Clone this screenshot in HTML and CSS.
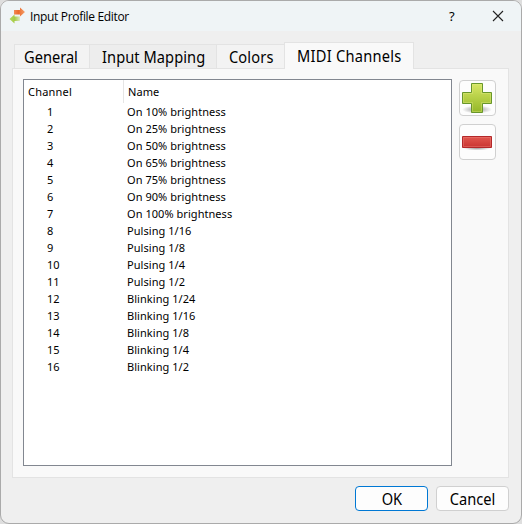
FILE: index.html
```html
<!DOCTYPE html>
<html lang="en">
<head>
<meta charset="utf-8">
<title>Input Profile Editor</title>
<link rel="stylesheet" href="styles.css">
</head>
<body>
<div class="window">
  <header class="titlebar">
    <svg class="app-icon" width="18" height="18" viewBox="0 0 18 18">
      <defs>
        <linearGradient id="orange"><stop offset="0" stop-color="#f28a55"/><stop offset=".4" stop-color="#ec6a2c"/><stop offset="1" stop-color="#f2a06c"/></linearGradient>
        <linearGradient id="lime"><stop offset="0" stop-color="#b4d65c"/><stop offset=".5" stop-color="#a6cc48"/><stop offset="1" stop-color="#dfe9c4"/></linearGradient>
      </defs>
      <path d="M5 3h6V.5l5 4.500-5 4.500V7.500H5z" fill="url(#orange)"/>
      <path d="M11 9.500H5.500V7.500L.5 12l5 4.500V14H11z" fill="url(#lime)"/>
    </svg>
    <span class="title">Input Profile Editor</span>
    <span class="help">?</span>
    <svg class="close" width="12" height="12" viewBox="0 0 12 12"><path d="M1 1l10 10M11 1L1 11" fill="none" stroke="#222" stroke-width="1.100"/></svg>
  </header>
  <nav class="tabs">
    <div class="tab general"><span>General</span></div>
    <div class="tab mapping"><span>Input Mapping</span></div>
    <div class="tab colors"><span>Colors</span></div>
    <div class="tab midi active"><span>MIDI Channels</span></div>
  </nav>
  <main class="page">
    <div class="list">
      <div class="head"><span class="channel-head">Channel</span><span class="name-head">Name</span></div>
      <div class="row"><span>1</span><span>On 10% brightness</span></div>
      <div class="row"><span>2</span><span>On 25% brightness</span></div>
      <div class="row"><span>3</span><span>On 50% brightness</span></div>
      <div class="row"><span>4</span><span>On 65% brightness</span></div>
      <div class="row"><span>5</span><span>On 75% brightness</span></div>
      <div class="row"><span>6</span><span>On 90% brightness</span></div>
      <div class="row"><span>7</span><span>On 100% brightness</span></div>
      <div class="row"><span>8</span><span>Pulsing 1/16</span></div>
      <div class="row"><span>9</span><span>Pulsing 1/8</span></div>
      <div class="row"><span>10</span><span>Pulsing 1/4</span></div>
      <div class="row"><span>11</span><span>Pulsing 1/2</span></div>
      <div class="row"><span>12</span><span>Blinking 1/24</span></div>
      <div class="row"><span>13</span><span>Blinking 1/16</span></div>
      <div class="row"><span>14</span><span>Blinking 1/8</span></div>
      <div class="row"><span>15</span><span>Blinking 1/4</span></div>
      <div class="row"><span>16</span><span>Blinking 1/2</span></div>
    </div>
    <div class="tools">
      <button class="tool" aria-label="Add">
        <svg width="32" height="32" viewBox="0 0 32 32">
          <defs>
            <linearGradient id="plus" x2="0" y2="1"><stop offset="0" stop-color="#d8e765"/><stop offset="1" stop-color="#93b727"/></linearGradient>
            <radialGradient id="shade"><stop offset="0" stop-color="#000" stop-opacity=".4"/><stop offset="1" stop-color="#000" stop-opacity="0"/></radialGradient>
          </defs>
          <ellipse cx="16" cy="27.500" rx="15" ry="4" fill="url(#shade)"/>
          <path d="M10.500 1.500h11v9h9v11h-9v9h-11v-9h-9v-11h9z" fill="url(#plus)" stroke="#68962b"/>
          <path d="M11.500 2.500h9v9h9v9h-9v9h-9v-9h-9v-9h9z" fill="none" stroke="#e4ee8c" stroke-opacity=".35"/>
        </svg>
      </button>
      <button class="tool" aria-label="Remove">
        <svg width="32" height="32" viewBox="0 0 32 32">
          <defs><linearGradient id="minus" x2="0" y2="1"><stop offset="0" stop-color="#e2574f"/><stop offset="1" stop-color="#c93531"/></linearGradient></defs>
          <ellipse cx="16" cy="22" rx="14" ry="2.500" fill="url(#shade)"/>
          <path d="M1.500 10.500h29v11h-29z" fill="url(#minus)" stroke="#b3282a"/>
          <path d="M2.500 11.500h27v9h-27z" fill="none" stroke="#f08880" stroke-opacity=".4"/>
        </svg>
      </button>
    </div>
  </main>
  <footer class="actions">
    <button class="btn primary"><span>OK</span></button>
    <button class="btn cancel"><span>Cancel</span></button>
  </footer>
</div>
</body>
</html>
```
FILE: styles.css
```css
* { box-sizing: border-box; }
body { margin: 0; background: #dedede; font-family: "Noto Sans", "Open Sans", sans-serif; color: #000; overflow: hidden; }
.window { width: 522px; height: 524px; border: 1px solid #aaa; border-radius: 9px; background: #efefef; overflow: hidden; display: flex; flex-direction: column; }
.titlebar { height: 30px; flex: none; background: #eff4f6; display: flex; align-items: center; padding: 0 17px 0 8px; font-size: 12px; }
.app-icon { margin-right: 3px; flex: none; }
.title { flex: 1; letter-spacing: -0.330px; font-family: "Open Sans", sans-serif; }
.help { width: 8px; margin-right: 35px; font-size: 13px; padding-bottom: 1px; }
.close { margin: -1px 0 0 0; }
.tabs { height: 37px; flex: none; padding-left: 13px; display: flex; align-items: flex-end; font-size: 17px; line-height: 20px; }
.tab { height: 24px; border: 1px solid #e3e3e3; border-width: 1px 1px 0 0; background: #f3f3f3; padding: 2px 0 0 9px; white-space: nowrap; }
.tab span, .btn span { display: inline-block; transform: scaleX(.86); }
.tab span { transform-origin: left center; }
.general { width: 76px; border-left-width: 1px; }
.mapping { width: 127px; padding-left: 12px; background: #ededed; letter-spacing: 0.080px; }
.colors { width: 68px; padding-left: 12px; letter-spacing: 0.150px; }
.midi { width: 130px; padding-left: 12px; margin-left: -1px; letter-spacing: 0.300px; }
.active { height: 27px; margin-bottom: -1px; padding-top: 3px; border-left-width: 1px; background: #f9f9f9; position: relative; }
.page { width: 497px; height: 410px; flex: none; margin-left: 11px; border: 1px solid #e3e3e3; background: #f9f9f9; padding: 10px; display: flex; gap: 7px; }
.list { width: 429px; height: 387px; flex: none; border: 1px solid #828790; background: #fff; font-size: 11px; letter-spacing: 0.050px; }
.head { height: 23px; display: flex; align-items: center; padding-left: 4px; }
.channel-head { width: 96px; height: 23px; line-height: 24px; border-right: 1px solid #e5e5e5; letter-spacing: 0.200px; }
.name-head { padding-left: 4px; line-height: 24px; }
.row { height: 17px; line-height: 17px; display: grid; grid-template-columns: 80px 1fr; padding-left: 23px; }
.tools { display: flex; flex-direction: column; gap: 8px; padding-top: 1px; }
.tool { width: 37px; height: 36px; border: 1px solid #d0d0d0; border-radius: 4px; background: #fdfdfd; padding: 1px 0 0 1px; display: flex; align-items: flex-start; flex: none; }
.tool svg { flex: none; }
.actions { padding: 8px 12px 0 0; display: flex; justify-content: flex-end; gap: 8px; }
.btn { width: 73px; height: 25px; border: 1px solid #d0d0d0; border-radius: 4px; background: #fdfdfd; font: 17px "Noto Sans", sans-serif; line-height: 23px; padding: 0; color: #000; display: flex; justify-content: center; }
.primary { border-color: #0078d4; }
```
